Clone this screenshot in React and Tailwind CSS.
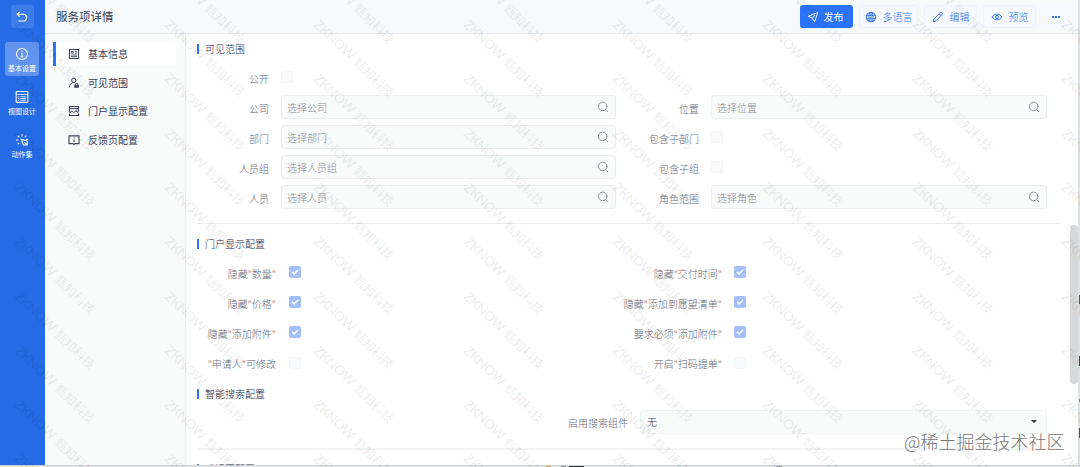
import React from "react";

const search = (
  <svg viewBox="0 0 12 12" className="h-3 w-3 shrink-0 text-[#8e939c]" fill="none" stroke="currentColor" strokeWidth="1" strokeLinecap="round">
    <circle cx="5.7" cy="5.4" r="4.3" />
    <path d="M9 8.8l1.8 1.9" />
  </svg>
);

function Label({ children, w }) {
  return <div className={w + " shrink-0 pt-px text-right text-[#666a77]"}>{children}</div>;
}

function Field({ text }) {
  return (
    <div className="flex h-6 flex-1 items-center justify-between rounded-[3px] border border-[#eceef0] bg-[#f9fafa] pr-[6px] pl-[5px] text-[#868b96]">
      <span className="pt-[2px]">{text}</span>
      <span className="pb-px">{search}</span>
    </div>
  );
}

function Check({ on }) {
  return on ? (
    <div className="mb-[2px] flex h-3 w-3 items-center justify-center rounded-[2px] bg-[#a3bffa]">
      <svg viewBox="0 0 12 12" className="h-3 w-3" fill="none" stroke="#fff" strokeWidth="1.5"><path d="M3 5.8l2.1 2.1L9.1 4" /></svg>
    </div>
  ) : (
    <div className="h-3 w-3 rounded-[2px] border border-[#f5f6f8] bg-[#f9fafb]" />
  );
}

function Heading({ children }) {
  return (
    <div className="flex h-5 items-center gap-[6px] text-[#23274a]">
      <i className="h-[10px] w-[2px] shrink-0 bg-[#2f73f2]" />
      <span>{children}</span>
    </div>
  );
}

const scope = [
  ["公开", null, null, null],
  ["公司", "选择公司", "位置", "选择位置"],
  ["部门", "选择部门", "包含子部门", null],
  ["人员组", "选择人员组", "包含子组", null],
  ["人员", "选择人员", "角色范围", "选择角色"],
];

const portal = [
  ['隐藏"数量"', '隐藏"交付时间"', true],
  ['隐藏"价格"', '隐藏"添加到愿望清单"', true],
  ['隐藏"添加附件"', '要求必须"添加附件"', true],
  ['"申请人"可修改', '开启"扫码提单"', false],
];

const iconProps = { viewBox: "0 0 12 12", fill: "none", stroke: "currentColor" };

const menu = [
  ["基本信息", <svg {...iconProps} className="h-3 w-3"><rect x="1.5" y="1.5" width="9" height="9" strokeWidth="1.1" /><path d="M3.3 3.5h2v1.6h-2zM6.8 3.4H9M6.8 5.2H9M3 7h6M3 8.7h6" strokeWidth="0.9" /></svg>],
  ["可见范围", <svg {...iconProps} className="h-3 w-3"><circle cx="5.8" cy="3.3" r="2.1" strokeWidth="1" /><path d="M1.2 10.6c.2-2.6 1.6-4.4 3.6-5.1" strokeWidth="1" /><rect x="6.7" y="8.1" width="4" height="2.4" fill="currentColor" strokeWidth="0.5" /><path d="M7.6 8V7.2c0-1.2 2.1-1.2 2.1 0V8" strokeWidth="0.8" /></svg>],
  ["门户显示配置", <svg {...iconProps} className="h-3 w-3"><path d="M1.5 7.4V1.5h9v5.2M1.5 3.5h9M1.5 8.8v1.7h9V8.4" strokeWidth="1.1" /><path d="M1.4 8l2.4-1.9 1.8 1.7L7.8 6l2.7 1.9M7.8 5.2h1.4" strokeWidth="1" /></svg>],
  ["反馈页配置", <svg {...iconProps} className="h-3 w-3"><path d="M1 1.9h10v7.7H7L6 10.7 5 9.6H1zM6 3.6v1M6 5.4v2.8" strokeWidth="1.1" /></svg>],
];

const rail = [
  ["基本设置", <svg {...iconProps} className="h-[14px] w-[14px]"><circle cx="6" cy="6" r="4.7" strokeWidth="0.9" /><path d="M6 3.2v1M5.2 5.3H6v3M4.9 8.4h2.2" strokeWidth="0.9" /></svg>],
  ["视图设计", <svg {...iconProps} className="h-[14px] w-[14px]"><rect x="1" y="1.3" width="10" height="9.3" rx="0.5" strokeWidth="0.9" /><path d="M1 3.8h10M2.6 5.8h1M4.6 5.8h4.8M2.6 7.3h1M4.6 7.3h4.8M2.6 8.8h1M4.6 8.8h4.8" strokeWidth="0.7" /></svg>],
  ["动作集", <svg {...iconProps} className="h-[14px] w-[14px]"><path d="M6 .9v2M2.3 2.3l1.4 1.4M.9 6h2M2.3 9.7l1.4-1.4M9.7 2.3L8.3 3.7M11.1 5.5H9.3M5.3 5.3l5.2 1.5v3.4H7.2zM8 8l2.5 2.2" strokeWidth="0.9" /></svg>],
];

const actions = [
  ["多语言", "w-[59px]", <svg {...iconProps} className="h-3 w-3"><circle cx="6" cy="6" r="4.6" strokeWidth="1.1" /><ellipse cx="6" cy="6" rx="2.1" ry="4.6" strokeWidth="1" /><path d="M1.6 4.4h8.8M1.6 7.6h8.8M6 1v10" strokeWidth="0.9" /></svg>],
  ["编辑", "w-[53px]", <svg {...iconProps} className="h-3 w-3"><path d="M1.3 10.7l.7-2.8L8.2 1.6c.6-.6 1.3-.4 1.8.1s.7 1.2.1 1.8L4 9.9zM7.1 2.9L9 4.8" strokeWidth="1" /></svg>],
  ["预览", "w-[53px]", <svg {...iconProps} className="h-3 w-3"><path d="M1 6C3.4 2.2 8.6 2.2 11 6 8.6 9.8 3.4 9.8 1 6z" strokeWidth="1" /><circle cx="6" cy="6" r="1.5" strokeWidth="1.1" /></svg>],
];

const marks = [];
for (let c = 0; c < 8; c++) for (let r = -1; r < 9; r++) marks.push([17 + c * 149.6, 22 + r * 54.3]);

export default function App() {
  return (
    <div className="relative flex h-[467px] w-[1080px] flex-col overflow-hidden bg-white font-['Noto_Sans_CJK_SC',sans-serif] text-[10px] leading-none font-light">
      <div className="flex h-[465px] shrink-0 overflow-hidden">
        <aside className="flex w-[45px] shrink-0 flex-col items-center bg-[#256be6] pt-[5px] pr-px text-white">
          <div className="flex h-[23px] w-[23px] items-center justify-center rounded-[3px] bg-[#3d7deb]">
            <svg viewBox="0 0 12 12" className="h-3 w-3" fill="none" stroke="currentColor" strokeWidth="1.2"><path d="M3.6 1L1.2 3.3l2.4 2.3M1.4 3.3h5.8c4.5 0 4.5 6.7 0 6.7H2.4" /></svg>
          </div>
          <div className="mt-[14px] flex flex-col gap-[9px]">
            {rail.map(([t, icon], i) => (
              <div key={t} className={"flex h-[34px] w-[34px] flex-col items-center gap-[4px] rounded-[3px] pt-[5px] text-[7px] font-normal whitespace-nowrap " + (i === 0 ? "bg-[#6294ee]" : "")}>
                {icon}
                <span>{t}</span>
              </div>
            ))}
          </div>
        </aside>
        <div className="flex min-w-0 flex-1 flex-col">
          <header className="flex h-[34px] shrink-0 items-center border-b border-[#e6e8ec] bg-[#f7f9fb] pr-[11px] pl-[11px]">
            <h1 className="flex-1 text-[11.5px] font-normal text-[#363c55]">服务项详情</h1>
            <div className="flex items-center text-[#3577f0]">
              <div className="mr-[6px] flex h-[23px] w-[53px] items-center justify-center gap-[5px] rounded-[3px] bg-[#2b74f9] pt-px pr-[3px] font-normal text-white">
                <svg {...iconProps} className="mb-px h-3 w-3"><path d="M1.2 5.2L10.8 1.5 7.6 10.7 5.2 7.2zM5.2 7.2L8.2 4" strokeWidth="1" /></svg>
                <span>发布</span>
              </div>
              <div className="flex gap-[6px]">
                {actions.map(([t, w, icon]) => (
                  <div key={t} className={w + " flex h-[23px] items-center justify-center gap-[6px] rounded-[3px] border border-[#f0f3fa] bg-[#f6f9fe] pt-px whitespace-nowrap"}>
                    <span className="pb-px">{icon}</span>
                    <span>{t}</span>
                  </div>
                ))}
                <div className="ml-[2px] flex h-[23px] w-[23px] items-center justify-center gap-px rounded-[3px] bg-[#f6f9fe]">
                  <i className="h-[2px] w-[2px] bg-[#2f73f2]" />
                  <i className="h-[2px] w-[2px] bg-[#2f73f2]" />
                  <i className="h-[2px] w-[2px] bg-[#2f73f2]" />
                </div>
              </div>
            </div>
          </header>
          <div className="flex min-h-0 flex-1">
            <nav className="flex w-[141px] shrink-0 flex-col gap-[4.7px] border-r border-[#e9ebee] bg-[#f9fafa] pt-[8px] pr-[9px] pl-[8px] font-normal text-[#3b4058]">
              {menu.map(([t, icon], i) => (
                <div key={t} className={"flex h-6 items-center gap-2 rounded-r-[3px] border-l-[3px] pl-3 " + (i === 0 ? "border-[#2f73f2] bg-white" : "border-transparent")}>
                  {icon}
                  <span>{t}</span>
                </div>
              ))}
            </nav>
            <main className="min-w-0 flex-1 overflow-hidden pt-[5px] pl-[11px]">
              <Heading>可见范围</Heading>
              <div className="pt-[3px]">
                {scope.map(([a, av, b, bv]) => (
                  <div key={a} className="flex h-[30px] items-center">
                    <Label w="w-[72px] translate-y-px">{a}</Label>
                    <div className="ml-3 flex w-[335px]">{av ? <Field text={av} /> : <Check />}</div>
                    {b && (
                      <>
                        <Label w="w-[83px] translate-y-px">{b}</Label>
                        <div className="ml-3 flex w-[336px]">{bv ? <Field text={bv} /> : <Check />}</div>
                      </>
                    )}
                  </div>
                ))}
              </div>
              <div className="mt-[11px] mb-[10px] h-px w-[863px] bg-[#e9ebed]" />
              <Heading>门户显示配置</Heading>
              <div className="pt-[4px]">
                {portal.map(([a, b, on]) => (
                  <div key={a} className="flex h-[30px] items-center">
                    <Label w="w-[79px]">{a}</Label>
                    <div className="ml-[13px] w-[354px]"><Check on={on} /></div>
                    <Label w="w-[79px] flex justify-end whitespace-nowrap">{b}</Label>
                    <div className="ml-[12px]"><Check on={on} /></div>
                  </div>
                ))}
              </div>
              <div className="pt-[6px]"><Heading>智能搜索配置</Heading></div>
              <div className="flex h-[30px] items-center pt-[6px]">
                <Label w="w-[431px]">启用搜索组件</Label>
                <div className="ml-[12px] flex h-6 w-[407px] items-center justify-between rounded-[3px] border border-[#f1f3f4] bg-[#f9fafa] pr-[9px] pl-[6px] text-[#3b4058]">
                  <span>无</span>
                  <svg viewBox="0 0 6 4" className="h-1 w-[6px]"><path d="M0 0h6L3 3z" fill="#333" /></svg>
                </div>
              </div>
              <div className="mt-[14px] mb-[9px] h-[2px] w-[863px] bg-[#f0f2f3]" />
              <Heading>反馈页配置</Heading>
            </main>
            <div className="flex w-[8px] flex-col pt-[191px]">
              <div className="h-[159px] rounded-full bg-[#d7d8d9]" />
            </div>
          </div>
        </div>
        <div className="flex w-[2px] shrink-0 flex-col items-end bg-[#dfe0e1] pt-[295px]">
          <i className="h-[9px] w-px bg-[#555]" />
          <i className="mt-[52px] h-[10px] w-px bg-[#444]" />
          <i className="mt-[33px] h-[3px] w-px bg-[#888]" />
          <i className="mt-[26px] h-[10px] w-px bg-[#555]" />
        </div>
      </div>
      <div className="flex h-[2px] shrink-0 items-end border-t border-[#cfd2d4] bg-[#e3e5e6] pl-[546px]">
        <i className="h-px w-[5px] bg-[#d9a25c]" />
        <i className="ml-[10px] h-px w-[5px] bg-[#888]" />
        <i className="ml-[3px] h-px w-[15px] bg-[#333]" />
        <i className="ml-[192px] h-px w-[6px] bg-[#999]" />
      </div>
      <div className="pointer-events-none absolute inset-0 overflow-hidden" aria-hidden="true">
        {marks.map(([x, y]) => (
          <span
            key={x + "," + y}
            className="absolute flex h-[14px] origin-[0_50%] rotate-[43.5deg] items-center gap-[4px] text-[12.6px] leading-none font-bold whitespace-nowrap text-black/[0.06]"
            style={{ left: x, top: y - 7 }}
          >
            <span className="font-[Lato,sans-serif] text-[14px] font-black tracking-[-0.8px]">ZKNOW</span>
            <span>甄知科技</span>
          </span>
        ))}
      </div>
      <div className="absolute top-[432px] left-[904px] text-[18px] whitespace-nowrap text-[#777] [text-shadow:0_0_1px_#fff]">@稀土掘金技术社区</div>
    </div>
  );
}
